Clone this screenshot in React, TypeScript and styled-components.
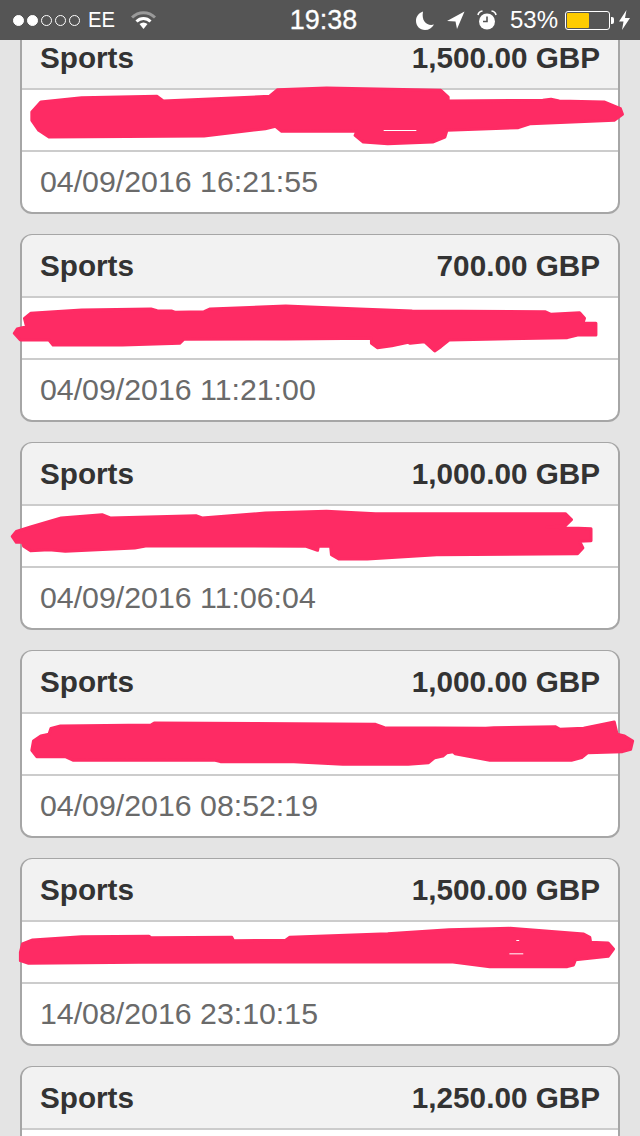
import React from "react";
import styled, { createGlobalStyle } from "styled-components";

const Global = createGlobalStyle`
  html, body { margin: 0; padding: 0; height: 1136px; overflow: hidden; background: #e4e4e4; }
  body { font-family: "Liberation Sans", Arial, sans-serif; }
`;

const Page = styled.div`
  width: 640px;
  height: 1136px;
  overflow: hidden;
  background: #e4e4e4;
`;

const StatusBar = styled.header`
  position: fixed;
  top: 0;
  left: 0;
  right: 0;
  z-index: 2;
  height: 40px;
  background: #555555;
  color: #ffffff;
  display: grid;
  grid-template-columns: 1fr auto 1fr;
  align-items: center;
  padding: 0 10px 0 13px;
  box-sizing: border-box;
`;

const StatusLeft = styled.div`
  display: flex;
  align-items: center;
`;

const Signal = styled.div`
  display: flex;
  gap: 3px;
  margin-right: 8px;
`;

const Dot = styled.span<{ $on: boolean }>`
  width: 11px;
  height: 11px;
  border-radius: 50%;
  box-sizing: border-box;
  border: 1px solid #ffffff;
  background: ${(p) => (p.$on ? "#ffffff" : "transparent")};
`;

const Carrier = styled.span`
  font-size: 22px;
  line-height: 26px;
  margin-right: 14px;
  transform: scaleX(0.92);
  transform-origin: left center;
`;

const Clock = styled.span`
  font-size: 27px;
  line-height: 30px;
  margin-left: 4px;
  -webkit-text-stroke: 0.3px #ffffff;
`;

const StatusRight = styled.div`
  display: flex;
  align-items: center;
  justify-content: flex-end;
`;

const Percent = styled.span`
  font-size: 24px;
  line-height: 28px;
  margin: 0 7px 0 13px;
`;

const Battery = styled.div`
  width: 45px;
  height: 19px;
  box-sizing: border-box;
  border: 1px solid #ffffff;
  border-radius: 3px;
  padding: 1px;
  position: relative;
  margin-right: 9px;
  &::after {
    content: "";
    position: absolute;
    right: -5px;
    top: 5px;
    width: 3px;
    height: 7px;
    background: #ffffff;
    border-radius: 0 2px 2px 0;
  }
`;

const BatteryFill = styled.div`
  height: 100%;
  background: #ffcc00;
  border-radius: 1px;
`;

const Icon = styled.svg<{ $gap?: number }>`
  display: block;
  flex: none;
  margin-left: ${(p) => p.$gap ?? 0}px;
`;

const List = styled.main`
  display: flex;
  flex-direction: column;
  gap: 20px;
  padding: 26px 20px 0;
`;

const Card = styled.article`
  border: 2px solid #a6a6a6;
  border-radius: 12px;
  background: #ffffff;
  flex: none;
`;

const CardHeader = styled.div`
  height: 60px;
  display: flex;
  align-items: center;
  justify-content: space-between;
  padding: 0 18px;
  background: #f2f2f2;
  border-radius: 10px 10px 0 0;
  color: #333333;
  font-size: 29.7px;
  font-weight: 700;
  margin-top: -1px;
  padding-top: 1px;
`;

const Description = styled.div`
  position: relative;
  height: 60px;
  border-top: 2px solid #cccccc;
`;

const Scribble = styled.svg`
  position: absolute;
  left: -22px;
  top: -3px;
  width: 640px;
  height: 65px;
  overflow: visible;
`;

const Ink = styled.polygon`
  fill: #fe2b64;
  stroke: #fe2b64;
  stroke-width: 3px;
  stroke-linejoin: round;
  vector-effect: non-scaling-stroke;
`;

const Slit = styled.rect`
  fill: #ffffff;
`;

const CardFooter = styled.div`
  height: 60px;
  display: flex;
  align-items: center;
  padding: 0 18px;
  border-top: 2px solid #cccccc;
  color: #6a6a6a;
  font-size: 30.3px;
`;

const scribbles: Record<string, { points: string; slits?: number[][] }> = {
  a: {
    points:
      "78,75 100,45 200,32 385,28 400,42 660,28 680,8 800,3 1080,10 1098,30 1098,42 1330,40 1350,37 1370,42 1480,45 1520,65 1525,82 1505,100 1300,110 1270,122 1095,130 1090,150 1060,165 950,170 890,165 870,145 875,132 690,133 675,118 650,125 500,147 120,150 95,130 78,100",
    slits: [[940, 129, 80, 3]],
  },
  b: {
    points:
      "35,115 42,102 65,95 60,70 75,55 200,45 370,42 385,47 420,48 430,52 500,50 515,42 700,33 880,42 1010,48 1335,50 1350,58 1420,53 1432,70 1428,85 1460,85 1460,120 1415,120 1390,128 1100,135 1080,155 1065,168 1040,140 1005,145 1000,142 960,152 925,158 910,145 910,130 700,132 450,133 440,145 300,150 160,150 130,150 120,135 50,135",
  },
  c: {
    points:
      "30,100 40,85 75,72 150,45 250,35 270,45 480,38 495,45 650,30 800,25 920,32 1385,32 1400,50 1385,68 1340,72 1448,77 1448,113 1420,115 1428,135 1415,152 1070,155 900,168 830,168 812,155 810,130 780,130 778,142 750,130 360,128 330,135 160,145 120,140 75,143 58,130 55,118 40,118",
  },
  d: {
    points:
      "78,118 82,90 100,75 120,70 125,52 148,45 370,42 378,36 920,40 942,50 1190,52 1210,50 1360,47 1372,55 1430,52 1505,33 1512,70 1530,75 1550,90 1545,115 1525,122 1440,125 1425,140 1400,148 1200,148 1115,128 1110,122 1095,125 1085,135 1065,140 1050,155 1000,160 840,160 720,152 540,152 525,147 180,148 160,137 90,137",
  },
  e: {
    points:
      "50,100 55,75 80,63 200,53 365,52 370,56 568,55 572,65 700,64 710,55 950,44 1100,32 1250,28 1430,45 1445,55 1447,70 1490,72 1503,90 1490,112 1410,122 1405,138 1390,143 1200,143 1105,128 340,130 70,133 50,125",
    slits: [
      [1248, 103, 34, 3],
      [1265, 63, 7, 3],
    ],
  },
};

const entries = [
  { amount: "1,500.00 GBP", date: "04/09/2016 16:21:55", mark: "a" },
  { amount: "700.00 GBP", date: "04/09/2016 11:21:00", mark: "b" },
  { amount: "1,000.00 GBP", date: "04/09/2016 11:06:04", mark: "c" },
  { amount: "1,000.00 GBP", date: "04/09/2016 08:52:19", mark: "d" },
  { amount: "1,500.00 GBP", date: "14/08/2016 23:10:15", mark: "e" },
  { amount: "1,250.00 GBP", date: "", mark: "" },
];

export default function App() {
  return (
    <Page>
      <Global />
      <StatusBar>
        <StatusLeft>
          <Signal>
            {[true, true, false, false, false].map((on, i) => (
              <Dot key={i} $on={on} />
            ))}
          </Signal>
          <Carrier>EE</Carrier>
          <Icon width="25" height="20" viewBox="0 0 25 20">
            <path d="M1 7.5 C7.5 1 17.5 1 24 7.5" fill="none" stroke="#9a9a9a" strokeWidth="3" />
            <path d="M5.5 11.5 C9.5 7.5 15.5 7.5 19.5 11.5" fill="none" stroke="#ffffff" strokeWidth="3" />
            <path d="M8.5 14 C11 12 14 12 16.5 14 L12.5 19 Z" fill="#ffffff" />
          </Icon>
        </StatusLeft>
        <Clock>19:38</Clock>
        <StatusRight>
          <Icon width="18" height="19" viewBox="0 0 18 19">
            <path d="M7 0.5 C2.5 2 0 5.5 0 10 C0 15 4 19 9 19 C13 19 16 17 18 13.5 C12 15.5 5 11 7 0.5 Z" fill="#ffffff" />
          </Icon>
          <Icon $gap={13} width="18" height="18" viewBox="0 0 18 18">
            <path d="M0 10 L17.5 0.5 L10 18 L8.5 10.5 Z" fill="#ffffff" />
          </Icon>
          <Icon $gap={12} width="20" height="20" viewBox="0 0 20 20">
            <circle cx="10" cy="11.5" r="8" fill="#ffffff" />
            <path d="M10 6.5 V11.5 H6" fill="none" stroke="#555555" strokeWidth="1.6" />
            <path d="M1 5 C1.5 2.5 3 1.3 5.5 1 M19 5 C18.5 2.5 17 1.3 14.5 1" fill="none" stroke="#ffffff" strokeWidth="1.6" />
          </Icon>
          <Percent>53%</Percent>
          <Battery>
            <BatteryFill style={{ width: "53%" }} />
          </Battery>
          <Icon width="11" height="20" viewBox="0 0 11 20">
            <path d="M7.5 0 L0 11.5 H4.5 L3 20 L11 8 H6 Z" fill="#ffffff" />
          </Icon>
        </StatusRight>
      </StatusBar>
      <List>
        {entries.map((e, i) => {
          const mark = scribbles[e.mark];
          return (
            <Card key={i}>
              <CardHeader>
                <span>Sports</span>
                <span>{e.amount}</span>
              </CardHeader>
              <Description>
                {mark && (
                  <Scribble viewBox="0 0 1568 195" preserveAspectRatio="none">
                    <Ink points={mark.points} />
                    {mark.slits?.map((s, j) => (
                      <Slit key={j} x={s[0]} y={s[1]} width={s[2]} height={s[3]} />
                    ))}
                  </Scribble>
                )}
              </Description>
              {e.date && <CardFooter>{e.date}</CardFooter>}
            </Card>
          );
        })}
      </List>
    </Page>
  );
}
